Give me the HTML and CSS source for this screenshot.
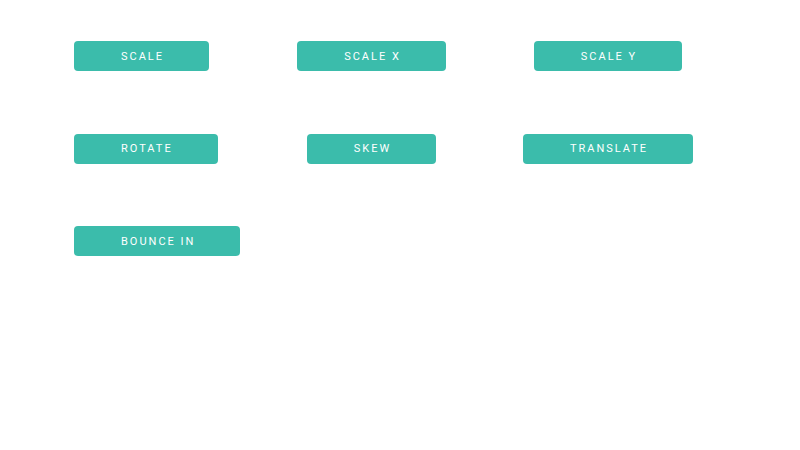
FILE: index.html
```html
<!DOCTYPE html>
<html>
<head>
<meta charset="utf-8">
<link rel="stylesheet" href="styles.css">
</head>
<body>
<div class="grid">
  <div class="cell first"><button class="btn">SCALE</button></div>
  <div class="cell"><button class="btn">SCALE X</button></div>
  <div class="cell"><button class="btn">SCALE Y</button></div>
  <div class="cell first"><button class="btn">ROTATE</button></div>
  <div class="cell"><button class="btn">SKEW</button></div>
  <div class="cell"><button class="btn">TRANSLATE</button></div>
  <div class="cell first"><button class="btn">BOUNCE IN</button></div>
</div>
</body>
</html>
```
FILE: styles.css
```css
html, body {
  margin: 0;
  padding: 0;
  background: #ffffff;
}
.grid {
  display: grid;
  grid-template-columns: 223px 149px 324px;
  grid-auto-rows: 30px;
  row-gap: 62.5px;
  padding: 41px 0 0 74px;
}
.cell {
  display: flex;
  justify-content: center;
}
.cell.first {
  justify-content: flex-start;
}
.btn {
  height: 30px;
  padding: 0 45px 0 47px;
  border: none;
  border-radius: 4px;
  background: #3bbcab;
  color: #ffffff;
  font-family: Roboto, "Liberation Sans", sans-serif;
  font-size: 11px;
  letter-spacing: 2px;
  white-space: nowrap;
  cursor: pointer;
}
```
